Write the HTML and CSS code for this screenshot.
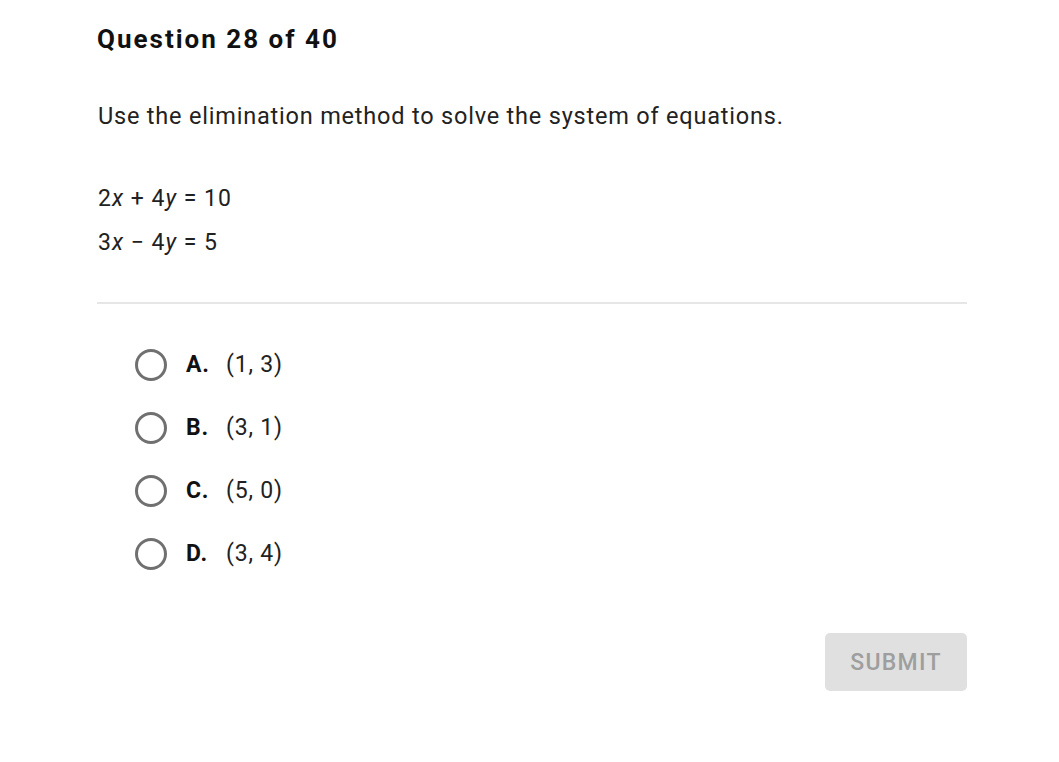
FILE: index.html
```html
<!DOCTYPE html>
<html>
<head>
<meta charset="utf-8">
<link rel="stylesheet" href="styles.css">
</head>
<body>
<main class="page">
  <h1 class="title">Question 28 of 40</h1>
  <p class="prompt">Use the elimination method to solve the system of equations.</p>
  <div class="equations">
    <div class="eq">2<i>x</i> + 4<i>y</i> = 10</div>
    <div class="eq">3<i>x</i> − 4<i>y</i> = 5</div>
  </div>
  <hr class="divider">
  <ul class="options">
    <li class="option"><span class="radio"></span><b class="letter">A.</b><span class="ans">(1, 3)</span></li>
    <li class="option"><span class="radio"></span><b class="letter">B.</b><span class="ans">(3, 1)</span></li>
    <li class="option"><span class="radio"></span><b class="letter">C.</b><span class="ans">(5, 0)</span></li>
    <li class="option"><span class="radio"></span><b class="letter">D.</b><span class="ans">(3, 4)</span></li>
  </ul>
  <div class="actions">
    <button class="submit">SUBMIT</button>
  </div>
</main>
</body>
</html>
```
FILE: styles.css
```css
html, body {
  margin: 0;
  padding: 0;
  background: #ffffff;
}
body {
  font-family: Roboto, "Liberation Sans", sans-serif;
  color: #212121;
}
.page {
  width: 870px;
  padding: 22px 0 0 97px;
}
.title {
  margin: 0;
  font-size: 26px;
  font-weight: 700;
  line-height: 34px;
  color: #111;
  letter-spacing: 2px;
}
.prompt {
  margin: 44px 0 0 1px;
  font-size: 23.5px;
  line-height: 32px;
  color: #222;
  letter-spacing: 0.8px;
}
.equations {
  margin: 45px 0 0 1px;
  font-size: 23px;
  letter-spacing: 1px;
}
.eq {
  line-height: 44px;
  height: 44px;
}
.eq i {
  font-style: italic;
}
.divider {
  margin: 37px 0 0 0;
  border: 0;
  border-top: 2px solid #e6e6e6;
  height: 0;
}
.options {
  list-style: none;
  margin: 29px 0 0 0;
  padding: 0 0 0 38px;
}
.option {
  display: flex;
  align-items: center;
  height: 63px;
  font-size: 23px;
  letter-spacing: 0.8px;
}
.radio {
  box-sizing: border-box;
  width: 32px;
  height: 32px;
  border: 3px solid #707070;
  border-radius: 50%;
  flex: none;
}
.letter {
  margin-left: 19px;
  width: 40px;
  font-weight: 700;
  color: #111;
}
.ans {
  color: #222;
}
.actions {
  display: flex;
  justify-content: flex-end;
  margin-top: 48px;
}
.submit {
  width: 142px;
  height: 58px;
  border: 0;
  border-radius: 5px;
  background: #e0e0e0;
  color: #9e9e9e;
  font-family: Roboto, "Liberation Sans", sans-serif;
  font-size: 23px;
  font-weight: 500;
  letter-spacing: 1.3px;
}
```
